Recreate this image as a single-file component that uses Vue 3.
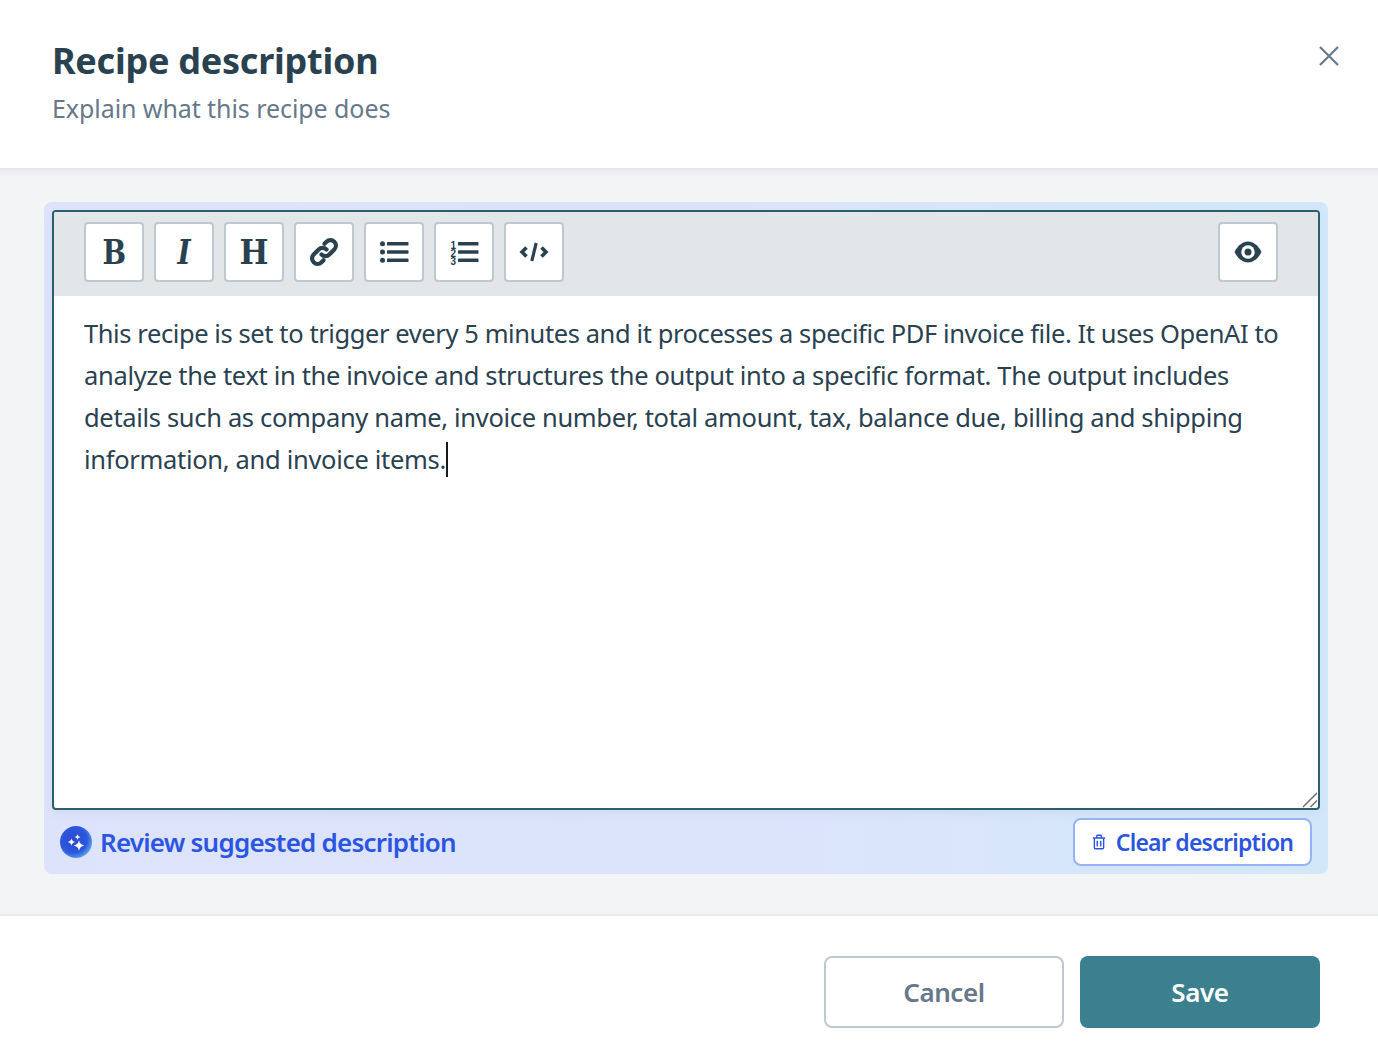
<!-- Recipe description modal -->
<template>
  <div class="modal">
    <header class="head">
      <div>
        <h1 class="title">Recipe description</h1>
        <p class="sub">Explain what this recipe does</p>
      </div>
      <button class="close" aria-label="Close">
        <svg width="22" height="22" viewBox="0 0 22 22"><path d="M2 2l18 18M20 2L2 20" stroke="#67788a" stroke-width="2.2" fill="none" /></svg>
      </button>
    </header>

    <main class="body">
      <div class="panel">
        <div class="editor">
          <div class="toolbar">
            <button v-for="t in textTools" :key="t.label" class="tool glyph" :class="t.cls"><span>{{ t.label }}</span></button>
            <button class="tool">
              <svg width="30" height="30" viewBox="0 0 30 30" fill="none" stroke="#2a4150" stroke-width="4.2" stroke-linecap="round">
                <path d="M12.500 17.500a5.500 5.500 0 0 0 7.800 0l5-5a5.500 5.500 0 0 0-7.800-7.800l-2 2" />
                <path d="M17.500 12.500a5.500 5.500 0 0 0-7.800 0l-5 5a5.500 5.500 0 0 0 7.800 7.800l2-2" />
              </svg>
            </button>
            <button class="tool">
              <svg width="30" height="30" viewBox="0 0 30 30" fill="#2a4150">
                <circle cx="3.500" cy="6.800" r="2.500" /><circle cx="3.500" cy="15" r="2.500" /><circle cx="3.500" cy="23.200" r="2.500" />
                <rect x="8" y="5" width="21.500" height="3.600" rx=".6" /><rect x="8" y="13.200" width="21.500" height="3.600" rx=".6" /><rect x="8" y="21.400" width="21.500" height="3.600" rx=".6" />
              </svg>
            </button>
            <button class="tool">
              <svg width="30" height="30" viewBox="0 0 30 30" fill="#2a4150">
                <rect x="9" y="5" width="20.500" height="3.600" rx=".6" /><rect x="9" y="13.200" width="20.500" height="3.600" rx=".6" /><rect x="9" y="21.400" width="20.500" height="3.600" rx=".6" />
                <text v-for="n in 3" :key="n" x="1.500" :y="3.300 + n * 8.300" class="num">{{ n }}</text>
              </svg>
            </button>
            <button class="tool">
              <svg width="30" height="30" viewBox="0 0 30 30" fill="none" stroke="#2a4150" stroke-width="3.600">
                <path d="M7.500 10.500L3 15l4.500 4.500M22.500 10.500L27 15l-4.500 4.500" />
                <path d="M17.200 6L12.800 24" stroke-width="3.200" />
              </svg>
            </button>
            <button class="tool eye">
              <svg width="30" height="30" viewBox="0 0 30 30">
                <path d="M1.500 15C5 8 10 4.500 15 4.500S25 8 28.500 15C25 22 20 25.500 15 25.500S5 22 1.500 15z" fill="#2a4150" />
                <circle cx="15" cy="15" r="6.800" fill="#fff" /><circle cx="15" cy="15" r="3.500" fill="#2a4150" />
              </svg>
            </button>
          </div>
          <div class="text">
            <div v-for="(l, i) in lines" :key="i" class="line" :style="{ letterSpacing: l.spacing + 'px' }">{{ l.text }}<span v-if="i === lines.length - 1" class="caret"></span></div>
            <svg class="grip" width="16" height="16" viewBox="0 0 16 16" fill="none" stroke="#707070" stroke-width="1.500"><path d="M1 15L15 1M8.500 15L15 8.500" /></svg>
          </div>
        </div>
        <div class="assist">
          <a class="review">
            <svg width="32" height="32" viewBox="0 0 32 32">
              <defs>
                <radialGradient id="ball" cx=".42" cy=".42" r=".68">
                  <stop offset="0" stop-color="#2a4bd6" />
                  <stop offset=".62" stop-color="#2d57dc" />
                  <stop offset="1" stop-color="#6cbcf0" />
                </radialGradient>
              </defs>
              <circle cx="16" cy="16" r="16" fill="url(#ball)" />
              <path v-for="s in stars" :key="s[0]" fill="#fff" :d="starPath(s[0], s[1], s[2])" />
            </svg>
            <span>Review suggested description</span>
          </a>
          <button class="clear">
            <svg width="14" height="16" viewBox="0 0 16 18" fill="none" stroke="#2b55e0" stroke-width="1.600"><path d="M1 4.500h14M5.500 4.500V2c0-.5.300-.8.800-.8h3.400c.5 0 .8.300.8.800v2.500M2.700 4.500v10.800c0 .8.600 1.400 1.400 1.400h7.800c.8 0 1.400-.6 1.400-1.400V4.500M6 7.500v6.500M10 7.500v6.500" /></svg>
            <span>Clear description</span>
          </button>
        </div>
      </div>
    </main>

    <footer class="foot">
      <button class="btn cancel">Cancel</button>
      <button class="btn save">Save</button>
    </footer>
  </div>
</template>

<script setup>
const textTools = [
  { label: "B", cls: "b" },
  { label: "I", cls: "i" },
  { label: "H", cls: "h" },
];

// each line carries its own tracking so the line ends land where they should
const lines = [
  { text: "This recipe is set to trigger every 5 minutes and it processes a specific PDF invoice file. It uses OpenAI to", spacing: -0.41 },
  { text: "analyze the text in the invoice and structures the output into a specific format. The output includes", spacing: -0.33 },
  { text: "details such as company name, invoice number, total amount, tax, balance due, billing and shipping", spacing: -0.33 },
  { text: "information, and invoice items.", spacing: -0.31 },
];

// sparkles on the blue ball: cx, cy, radius
const stars = [
  [19, 19.5, 5.2],
  [11.5, 16, 3.8],
  [17.5, 11, 2.8],
];

function starPath(x, y, r) {
  const k = r * 0.16;
  return `M${x} ${y - r}Q${x + k} ${y - k} ${x + r} ${y}Q${x + k} ${y + k} ${x} ${y + r}Q${x - k} ${y + k} ${x - r} ${y}Q${x - k} ${y - k} ${x} ${y - r}z`;
}
</script>

<style>
html, body { margin: 0; background: #fff; }
</style>

<style scoped>
.modal { width: 1378px; height: 1060px; display: flex; flex-direction: column; font-family: "Noto Sans", "Open Sans", sans-serif; color: #2a4150; overflow: hidden; }
button { font-family: inherit; cursor: pointer; padding: 0; }

.head { height: 169px; flex: none; box-sizing: border-box; padding: 38px 38px 0 52px; display: flex; justify-content: space-between; align-items: flex-start; background: #fff; border-bottom: 1px solid #e4e7ea; position: relative; z-index: 1; }
.title { margin: 0; font-size: 36px; line-height: 46px; font-weight: 700; letter-spacing: -.25px; color: #2a4150; }
.sub { margin: 2px 0 0; font-size: 25px; line-height: 44px; letter-spacing: -.07px; color: #67788a; }
.close { border: 0; background: none; width: 22px; height: 22px; margin-top: 7px; }

.body { flex: 1; background: #f3f4f6; padding: 33px 50px 0 44px; border-bottom: 2px solid #e7e9eb; box-shadow: inset 0 8px 8px -8px rgba(42, 65, 80, .12); }
.panel { height: 672px; box-sizing: border-box; padding: 8px 8px 0; border-radius: 8px; background: linear-gradient(90deg, #dde3fb 0%, #dbe4fb 60%, #d2e8fa 100%); display: flex; flex-direction: column; }
.editor { height: 600px; flex: none; box-sizing: border-box; border: 2px solid #2b5f6b; border-radius: 4px; background: #fff; display: flex; flex-direction: column; overflow: hidden; box-shadow: 0 4px 10px rgba(42, 65, 80, .05); }

.toolbar { height: 84px; flex: none; box-sizing: border-box; background: #e2e6e9; padding: 10px 40px 0 30px; display: flex; gap: 10px; align-items: flex-start; }
.tool { width: 60px; height: 60px; box-sizing: border-box; background: #fff; border: 2px solid #bfc7cf; border-radius: 4px; display: grid; place-items: center; color: #2a4150; }
.glyph { font-family: "DejaVu Serif", serif; font-weight: 700; font-size: 34px; line-height: 1; }
.glyph span { display: block; transform: scaleX(.82); }
.glyph.h span { transform: scaleX(.9); }
.glyph.i { font-style: italic; }
.num { font-family: "Liberation Sans", sans-serif; font-weight: 700; font-size: 10px; }
.eye { margin-left: auto; }

.text { flex: 1; padding: 16px 30px 0; position: relative; font-size: 25.5px; line-height: 42px; color: #2a4150; }
.line { white-space: nowrap; }
.caret { display: inline-block; width: 2px; height: 35px; background: #1a1a1a; vertical-align: -8px; }
.grip { position: absolute; right: 0; bottom: 0; }

.assist { flex: 1; display: flex; align-items: center; justify-content: space-between; padding: 0 8px; }
.review { display: flex; align-items: center; gap: 8px; font-size: 26px; font-weight: 600; letter-spacing: -.78px; color: #2b55e0; }
.review svg { display: block; }
.clear { width: 239px; height: 48px; box-sizing: border-box; display: flex; align-items: center; justify-content: center; gap: 10px; background: #fff; border: 2px solid #98b3f5; border-radius: 8px; font-size: 23px; font-weight: 600; letter-spacing: -.76px; color: #2b55e0; }

.foot { height: 144px; flex: none; box-sizing: border-box; padding: 40px 58px 0 0; display: flex; justify-content: flex-end; gap: 16px; background: #fff; }
.btn { width: 240px; height: 72px; box-sizing: border-box; border-radius: 8px; font-size: 26px; font-weight: 600; letter-spacing: -.4px; }
.cancel { background: #fff; border: 2px solid #bfc7cf; color: #67788a; }
.save { background: #3c7f8e; border: 0; color: #fff; }
</style>
